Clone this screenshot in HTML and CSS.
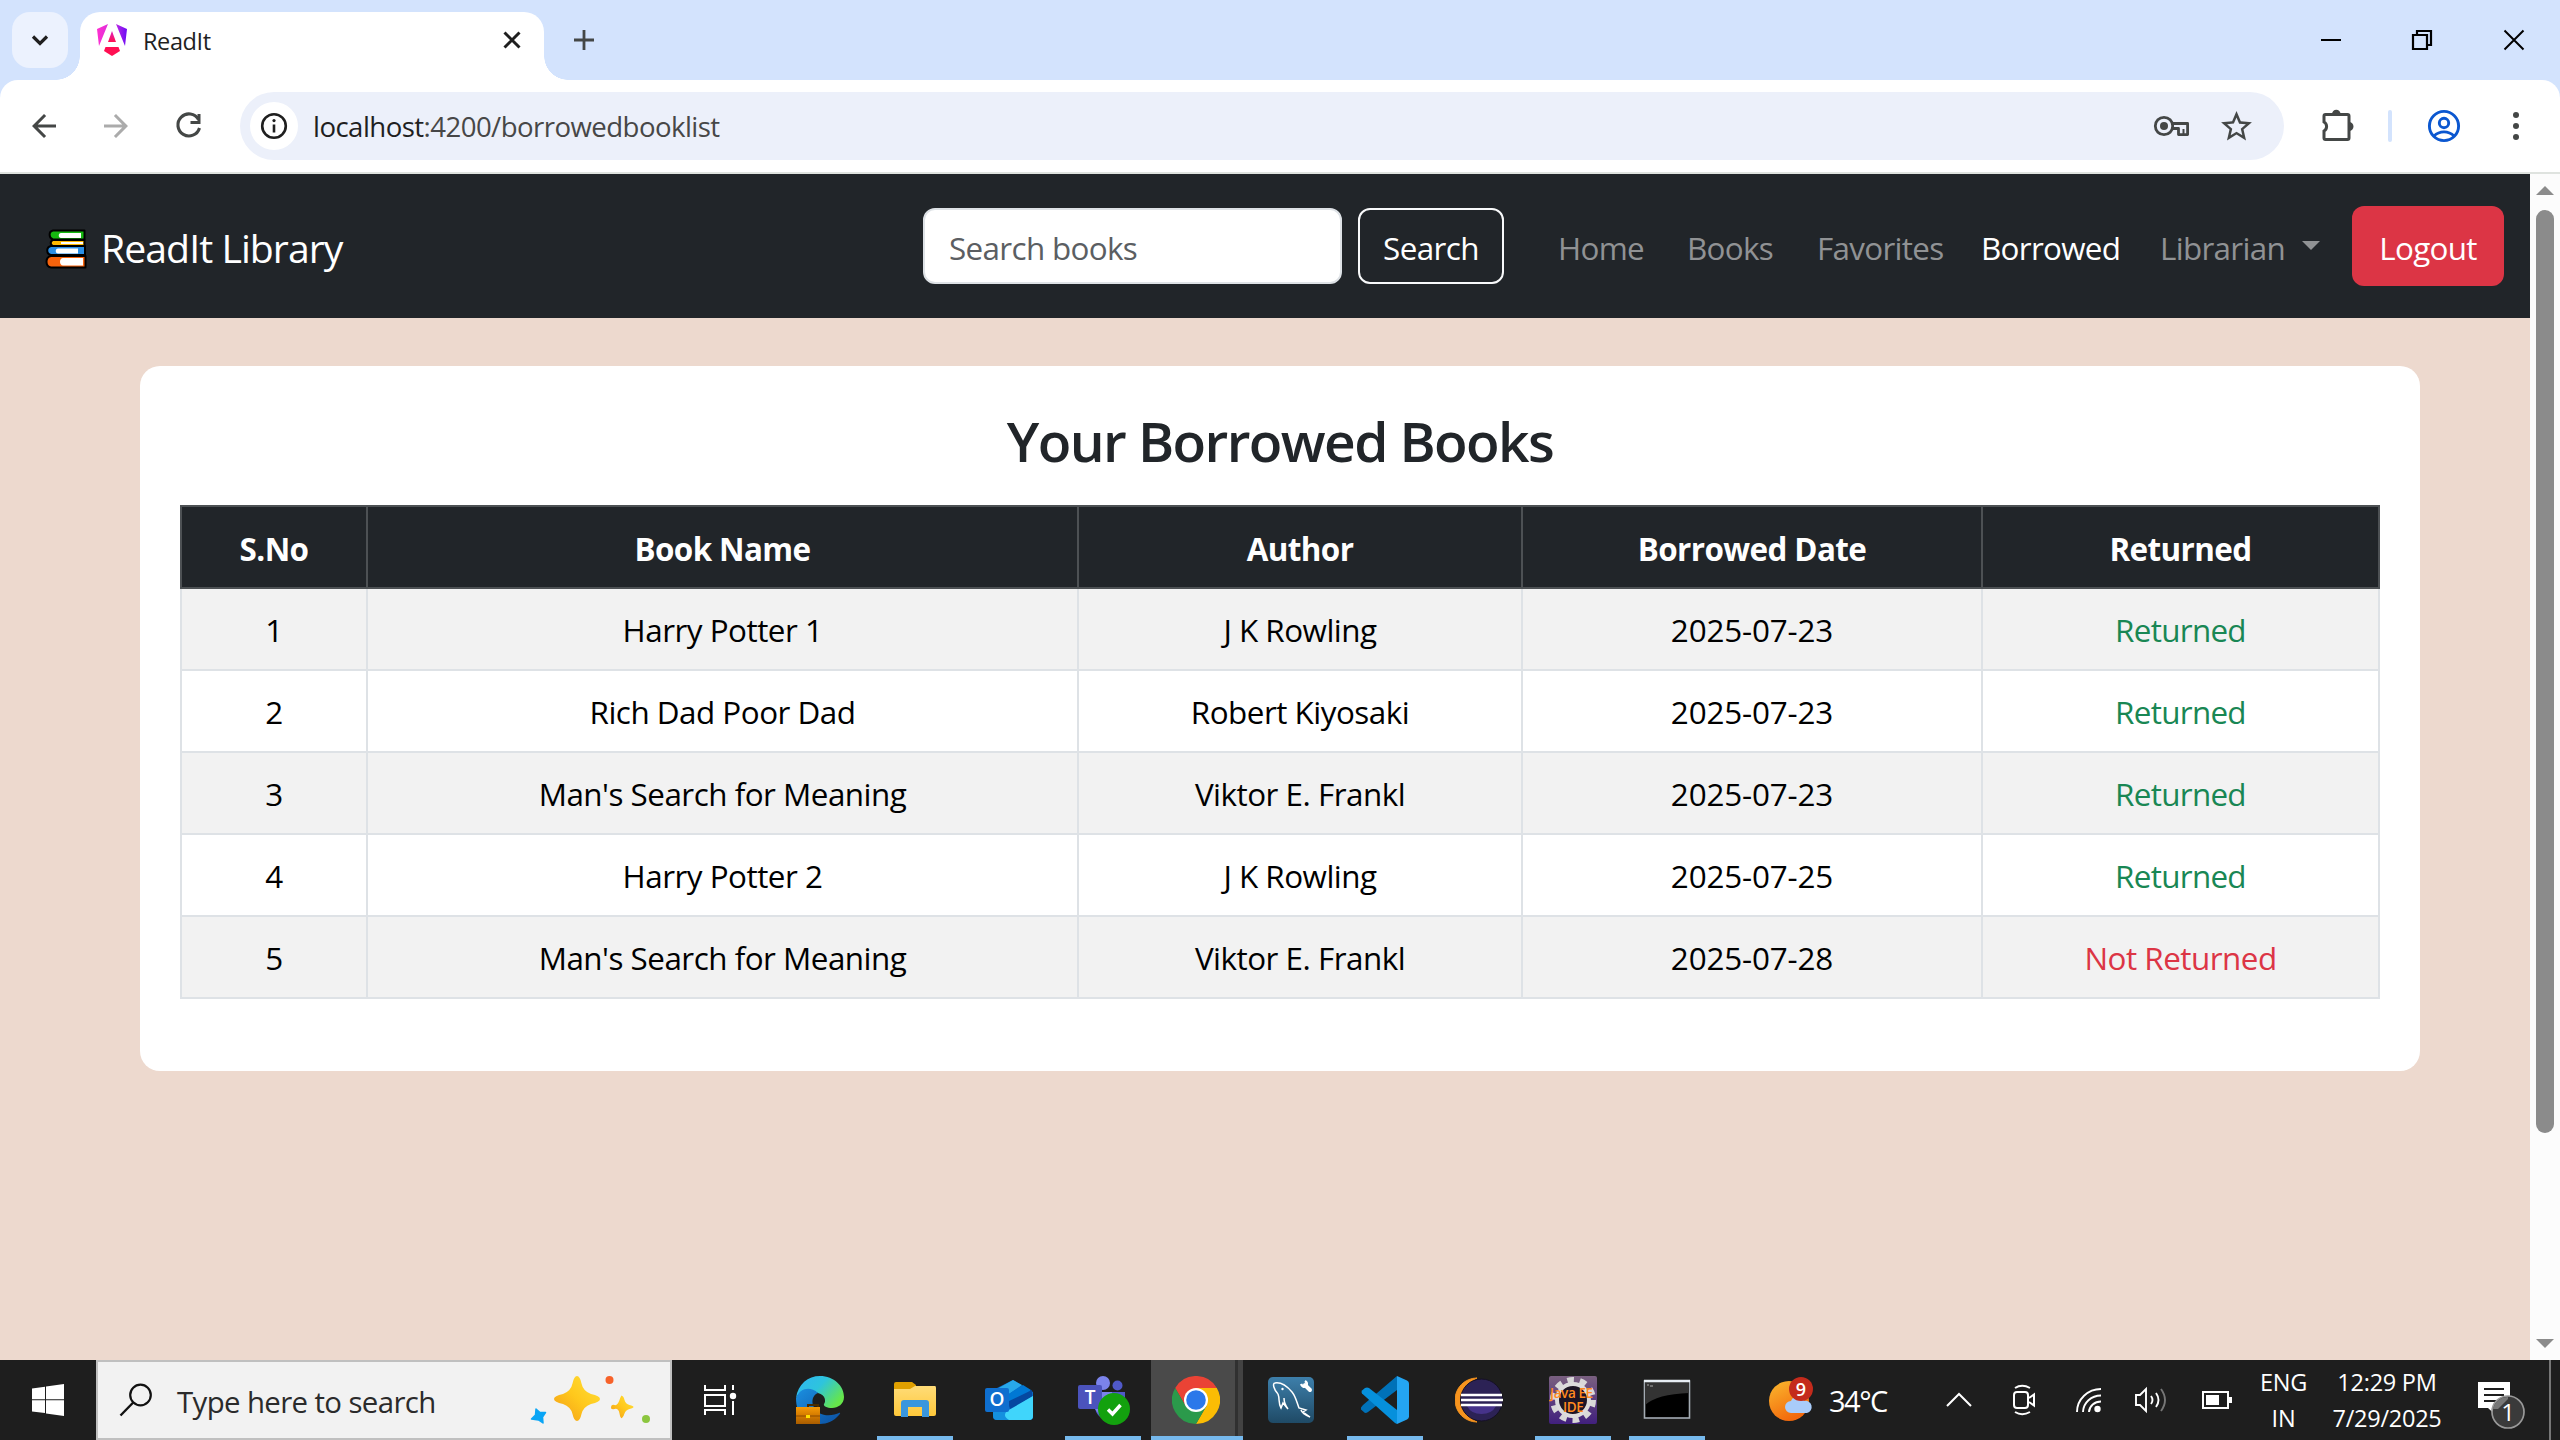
FILE: index.html
```html
<!DOCTYPE html>
<html lang="en">
<head>
<meta charset="utf-8">
<title>ReadIt</title>
<link rel="stylesheet" href="styles.css">
</head>
<body>
<div class="screen">
  <header class="tabstrip">
    <div class="tab-menu">
      <svg width="56" height="56" viewBox="0 0 56 56"><path d="M21 24.500l7 7 7-7" fill="none" stroke="#1f1f1f" stroke-width="3.200"/></svg>
    </div>
    <div class="tab">
      <svg class="favicon" width="32" height="34" viewBox="0 0 32 34">
        <defs>
          <linearGradient id="ngA" x1="0" y1="0" x2="1" y2="0"><stop offset="0" stop-color="#ff2fd0"/><stop offset=".55" stop-color="#d02ee0"/><stop offset="1" stop-color="#6a0cf5"/></linearGradient>
          <linearGradient id="ngB" x1="0" y1="0" x2="0" y2="1"><stop offset="0" stop-color="#e01fc0"/><stop offset="1" stop-color="#ff1150"/></linearGradient>
        </defs>
        <path d="M1 6L12 1 3 23zM31 6L20 1l9 22z" fill="url(#ngA)"/>
        <path d="M16 8l4 11h-8z" fill="url(#ngB)"/>
        <path d="M9.500 24h13l1.500 4-8 5-8-5z" fill="#ff0f52"/>
      </svg>
      <span class="tab-title">ReadIt</span>
      <svg class="tab-close" width="20" height="20" viewBox="0 0 20 20"><path d="M2.500 2.500l15 15M17.500 2.500l-15 15" stroke="#1f1f1f" stroke-width="3"/></svg>
    </div>
    <svg class="tab-add" width="24" height="24" viewBox="0 0 24 24"><path d="M12 2v20M2 12h20" stroke="#444746" stroke-width="2.800"/></svg>
    <div class="window-controls">
      <svg width="92" height="80" viewBox="0 0 92 80"><path d="M37 40h20" stroke="#000" stroke-width="2"/></svg>
      <svg width="92" height="80" viewBox="0 0 92 80"><path d="M37 35h14v14H37zM41 34v-3h14v14h-3" fill="none" stroke="#000" stroke-width="2.200"/></svg>
      <svg width="92" height="80" viewBox="0 0 92 80"><path d="M36.500 30.500l19 19M55.500 30.500l-19 19" stroke="#000" stroke-width="2"/></svg>
    </div>
  </header>

  <div class="toolbar-wrap">
    <div class="toolbar">
      <svg class="nav-back" width="36" height="36" viewBox="0 0 24 24"><path d="M20 11H7.830l5.590-5.590L12 4l-8 8 8 8 1.410-1.410L7.830 13H20z" fill="#444746"/></svg>
      <svg class="nav-forward" width="36" height="36" viewBox="0 0 24 24"><path d="M4 11h12.170l-5.590-5.590L12 4l8 8-8 8-1.410-1.410L16.170 13H4z" fill="#ababab"/></svg>
      <svg class="nav-reload" width="36" height="36" viewBox="0 0 36 36"><path d="M27.500 11.500A11 11 0 1 0 28.500 20" fill="none" stroke="#444746" stroke-width="3.100"/><path d="M29.500 6v10h-10v-3h7V6z" fill="#444746"/></svg>
      <div class="omnibox">
        <div class="site-info">
          <svg width="30" height="30" viewBox="0 0 30 30"><circle cx="15" cy="15" r="11.800" fill="none" stroke="#1f1f1f" stroke-width="2.600"/><path d="M15 13.500v8" stroke="#1f1f1f" stroke-width="2.600"/><circle cx="15" cy="9.600" r="1.600" fill="#1f1f1f"/></svg>
        </div>
        <span class="url"><b>localhost</b>:4200/borrowedbooklist</span>
        <svg class="key" width="40" height="24" viewBox="0 0 40 24"><circle cx="12" cy="12" r="8.700" fill="none" stroke="#444746" stroke-width="2.800"/><circle cx="12" cy="12" r="4" fill="#444746"/><path d="M19.500 9.500H35.600V20.600H26.500V14.500H19.500" fill="none" stroke="#444746" stroke-width="2.800" stroke-linejoin="round"/><path d="M31.500 15v5" stroke="#444746" stroke-width="2"/></svg>
        <svg class="star" width="37" height="37" viewBox="0 0 24 24"><path d="M22 9.240l-7.190-.62L12 2 9.190 8.630 2 9.240l5.460 4.730L5.820 21 12 17.270 18.180 21l-1.630-7.030L22 9.240zM12 15.400l-3.760 2.270 1-4.280-3.320-2.880 4.380-.38L12 6.100l1.710 4.040 4.380.38-3.320 2.880 1 4.280L12 15.400z" fill="#444746"/></svg>
      </div>
      <svg class="puzzle" width="36" height="36" viewBox="0 0 36 36"><path d="M6.500 6.500h22a1.500 1.500 0 0 1 1.500 1.500v22a1.500 1.500 0 0 1-1.500 1.500h-22A1.500 1.500 0 0 1 5 30v-7a5.200 5.200 0 0 0 0-9V8a1.500 1.500 0 0 1 1.500-1.500z" fill="none" stroke="#444746" stroke-width="3"/><path d="M13 6a4.300 4.300 0 0 1 8.600 0zM30 14a4.300 4.300 0 0 1 0 9z" fill="#444746"/></svg>
      <i class="divider"></i>
      <svg class="profile" width="36" height="36" viewBox="0 0 36 36"><g fill="none" stroke="#0b57d0" stroke-width="2.900"><circle cx="18" cy="18" r="14.600"/><circle cx="18" cy="15" r="4.700"/><path d="M8 28c5.500-5.500 14.500-5.500 20 0"/></g></svg>
      <svg class="more" width="12" height="36" viewBox="0 0 12 36"><g fill="#444746"><circle cx="6" cy="7" r="3"/><circle cx="6" cy="18" r="3"/><circle cx="6" cy="29" r="3"/></g></svg>
    </div>
  </div>

  <div class="viewport">
    <main class="page">
      <nav class="navbar">
        <svg class="books" width="42" height="40" viewBox="0 0 42 40">
          <g stroke="#000" stroke-width="2" stroke-linejoin="round">
            <path d="M8 1.500h31.500v9H8c-4-1-5-8 0-9z" fill="#16b810"/>
            <path d="M8 11h31.500v6H8c-3-1-3-5 0-6z" fill="#ffb900"/>
            <path d="M6 17h34v9H6c-5-1-5-8 0-9z" fill="#2a8fe6"/>
            <path d="M6 27h34.500v11.500H6c-6-1-6-10.500 0-11.500z" fill="#f7630c"/>
          </g>
          <path d="M16 4h20v5H16c-3 0-3-5 0-5zM16 13h22v2H16zM13 19.500h20v5H13c-3 0-3-5 0-5zM18 29h20v7.500H18c-4 0-4-7.500 0-7.500z" fill="#fff"/>
        </svg>
        <a class="brand">ReadIt Library</a>
        <form class="search">
          <div class="search-input">Search books</div>
          <div class="search-button">Search</div>
        </form>
        <ul class="links">
          <li class="home">Home</li>
          <li class="booklink">Books</li>
          <li class="favorites">Favorites</li>
          <li class="borrowed active">Borrowed</li>
          <li class="role">Librarian<i class="caret"></i></li>
        </ul>
        <div class="logout">Logout</div>
      </nav>

      <section class="card">
        <h2>Your Borrowed Books</h2>
        <table>
          <colgroup><col class="c1"><col class="c2"><col class="c3"><col class="c4"><col class="c5"></colgroup>
          <thead>
            <tr><th>S.No</th><th>Book Name</th><th>Author</th><th>Borrowed Date</th><th>Returned</th></tr>
          </thead>
          <tbody>
            <tr><td>1</td><td>Harry Potter 1</td><td>J K Rowling</td><td class="date">2025-07-23</td><td class="yes">Returned</td></tr>
            <tr><td>2</td><td>Rich Dad Poor Dad</td><td>Robert Kiyosaki</td><td class="date">2025-07-23</td><td class="yes">Returned</td></tr>
            <tr><td>3</td><td>Man's Search for Meaning</td><td>Viktor E. Frankl</td><td class="date">2025-07-23</td><td class="yes">Returned</td></tr>
            <tr><td>4</td><td>Harry Potter 2</td><td>J K Rowling</td><td class="date">2025-07-25</td><td class="yes">Returned</td></tr>
            <tr><td>5</td><td>Man's Search for Meaning</td><td>Viktor E. Frankl</td><td class="date">2025-07-28</td><td class="no">Not Returned</td></tr>
          </tbody>
        </table>
      </section>
    </main>
    <aside class="scrollbar">
      <svg width="18" height="9" viewBox="0 0 18 9"><path d="M0 9L9 0l9 9z" fill="#8b8b8b"/></svg>
      <div class="thumb"></div>
      <svg class="down" width="18" height="9" viewBox="0 0 18 9"><path d="M0 0h18L9 9z" fill="#8b8b8b"/></svg>
    </aside>
  </div>

  <footer class="taskbar">
    <div class="start">
      <svg width="32" height="32" viewBox="0 0 32 32"><path d="M0 4.500L13 2.700v12.600H0zM14 2.500L32 0v15.300H14zM0 16.300h13v12.800L0 27.400zM14 16.300h18V32l-18-2.600z" fill="#fff"/></svg>
    </div>
    <div class="task-search">
      <svg width="34" height="34" viewBox="0 0 34 34"><circle cx="21.500" cy="12" r="10.300" fill="none" stroke="#111" stroke-width="2.200"/><path d="M14.200 19.500L1.500 32.500" stroke="#111" stroke-width="2.400"/></svg>
      <span>Type here to search</span>
      <svg class="sparkles" width="124" height="52" viewBox="0 0 124 52">
        <defs><linearGradient id="gold" x1="1" y1="0" x2="0" y2="1"><stop offset="0" stop-color="#ffe03a"/><stop offset=".5" stop-color="#ffc81c"/><stop offset="1" stop-color="#f29a18"/></linearGradient></defs>
        <path d="M49 2q3 0 4.500 7.500Q55 17 63 20q9 2 9 5t-9 5q-8 3-9.500 10Q52 47 49 47t-4.500-7Q43 33 35 30q-9-2-9-5t9-5q8-3 9.500-10.500Q46 2 49 2z" fill="url(#gold)"/>
        <path d="M94 22q1.500 0 2.500 4t5 5q4 1 4 2t-4 2-5 4.500-2.500 4.500-2.500-4.500-5-4.500-3.500-2 3.500-2 5-5 2.500-4z" fill="url(#gold)"/>
        <path d="M8 35l4 3.500 5.500 0-3 4.500 .5 6-4.500-3-7-1 4-4z" fill="#0aa5f5" stroke="#0aa5f5" stroke-width="1.500" stroke-linejoin="round"/>
        <circle cx="81.500" cy="6" r="4" fill="#f7622a"/><circle cx="118" cy="45" r="4" fill="#8cc63f"/>
      </svg>
    </div>
    <div class="task-view">
      <svg width="34" height="32" viewBox="0 0 34 32"><path d="M2 1v5h20V1M2 11h20v11H2zM2 31v-5h20v5M30 1v5M30 17v14" fill="none" stroke="#fff" stroke-width="2"/><circle cx="30" cy="12" r="3.200" fill="#fff"/></svg>
    </div>
    <div class="apps">
      <div class="app"><svg width="48" height="48" viewBox="0 0 48 48">
        <defs>
          <linearGradient id="edA" x1="0" y1="0" x2="1" y2=".6"><stop offset="0" stop-color="#2fb6f5"/><stop offset=".5" stop-color="#2ec4dd"/><stop offset="1" stop-color="#66e64a"/></linearGradient>
          <linearGradient id="edB" x1="0" y1="0" x2="1" y2="1"><stop offset="0" stop-color="#1b8fe0"/><stop offset="1" stop-color="#0b4fa0"/></linearGradient>
          <linearGradient id="bag" x1="0" y1="0" x2="0" y2="1"><stop offset="0" stop-color="#f59a08"/><stop offset=".45" stop-color="#d77d00"/><stop offset="1" stop-color="#a85c00"/></linearGradient>
        </defs>
        <path d="M0 22C2 8 12 0 24 0c14 0 24 10 24 21 0 7-6 11-12 11-5 0-9-2-8-4 2-2 2-9-6-11C14 12 4 14 0 22z" fill="url(#edA)"/>
        <path d="M0 22C4 12 14 10 22 17c-6 2-9 12 1 20 7 4 16 2 20 0 2-1 1 1 0 2-5 6-12 9-19 9C8 48 0 38 0 22z" fill="url(#edB)"/>
        <path d="M12 31v-2h10v2" fill="none" stroke="#4a2c00" stroke-width="2"/>
        <path d="M0 31h24v17H0z" fill="url(#bag)"/><path d="M0 39.500h24v1H0z" fill="#8a4a00"/><path d="M10 39h4v3h-4z" fill="#ffe100"/>
      </svg></div>
      <div class="app open"><svg class="shifted" width="48" height="48" viewBox="0 0 48 48">
        <defs><linearGradient id="fold" x1="0" y1="0" x2="0" y2="1"><stop offset="0" stop-color="#ffdc78"/><stop offset="1" stop-color="#ffc83a"/></linearGradient></defs>
        <path d="M5 6h16l4 3v6H3V8q0-2 2-2z" fill="#e0a000"/><path d="M3 13h16l5-3h20q1 0 1 2v26q0 2-2 2H5q-2 0-2-2z" fill="url(#fold)"/>
        <path d="M10 41V27q0-3 3-3h22q3 0 3 3v14h-7V31H17v10z" fill="#3996dd"/>
      </svg></div>
      <div class="app"><svg class="shifted" width="48" height="48" viewBox="0 0 48 48">
        <path d="M8 14L28 4l20 12v24q0 4-4 4H12q-4 0-4-4z" fill="#0a66c2"/>
        <path d="M10 14L28 4l9 5-16 11z" fill="#28a8ea"/><path d="M22 19l16-10 8 5-22 15z" fill="#0078d4"/><path d="M22 26l25-12v8L26 34z" fill="#0548a0"/>
        <path d="M8 36h14l26-16v20q0 4-4 4H12q-4 0-4-4z" fill="#1490df"/><path d="M48 20v20q0 4-4 4H24q-7-4-2-9z" fill="#40d5fb"/>
        <rect y="12" width="24" height="24" rx="2" fill="#0f6fcf"/><text x="12" y="30" class="glyph-o">O</text>
      </svg></div>
      <div class="app open"><svg class="teams" width="54" height="52" viewBox="0 0 54 52">
        <circle cx="25" cy="9" r="7" fill="#7b83eb"/><circle cx="39.500" cy="11.500" r="5" fill="#5059c9"/>
        <path d="M14 18h33v12L35 46q-8 2-14-4-4-4-4-10z" fill="#5059c9"/><path d="M14 18h20v26q-10 1-14-5-4-4-4-10z" fill="#7b83eb"/>
        <rect y="11" width="24" height="24" rx="2" fill="#4b53bc"/><text x="12" y="29.500" class="glyph-t">T</text>
        <circle cx="36" cy="35" r="16" fill="#13a10e"/><path d="M30 35.500l4.500 4.500 8-9" fill="none" stroke="#fff" stroke-width="3.400"/>
      </svg></div>
      <div class="app open current"><svg width="48" height="48" viewBox="0 0 48 48">
        <path d="M3.200 12l10.400 18L24 12h20.800A24 24 0 0 0 3.200 12z" fill="#ea4335"/>
        <path d="M24 12h20.800A24 24 0 0 1 24 48l10.400-18z" fill="#fbbc04"/>
        <path d="M3.200 12A24 24 0 0 0 24 48l10.400-18H13.600z" fill="#2b9a4b"/>
        <circle cx="24" cy="24" r="12" fill="#fff"/><circle cx="24" cy="24" r="9.800" fill="#2b78ea"/>
      </svg></div>
      <div class="app"><svg class="shifted" width="48" height="48" viewBox="0 0 48 48">
        <defs><linearGradient id="wb" x1="0" y1="0" x2="0" y2="1"><stop offset="0" stop-color="#3d7fab"/><stop offset="1" stop-color="#1f4a66"/></linearGradient></defs>
        <rect x="1" y="1" width="46" height="46" rx="5" fill="url(#wb)"/>
        <path d="M11 18C7 14 5 7 8 7c6-1 11 2 17 9 4 5 5 11 7 16l7 2-3 2 7 5c-5-2-8-4-9-7M11 18c2 5 0 9 3 14l2-5 5 6c-3-4-4-8-4-11" fill="none" stroke="#fff" stroke-width="1.500"/><circle cx="15.500" cy="13" r="1.200" fill="#fff"/>
        <path d="M38 9l5 5" stroke="#fff" stroke-width="4" stroke-linecap="round"/><path d="M34 8q2 4 5 2 2-3-1-5" fill="none" stroke="#fff" stroke-width="2.500"/>
      </svg></div>
      <div class="app open"><svg class="shifted" width="48" height="48" viewBox="0 0 48 48">
        <path d="M0 31.500v2L4 37q2 0 3-1L36 14V0L2 29z" fill="#0071b8"/>
        <path d="M1 17.500q-1-1.500 0-3L4 12q2-1 4 0l28 22v14l-2-1z" fill="#0690dc"/><path d="M36 0l10 4.500q2 1 2 3v33q0 2-2 3L36 48z" fill="#24a5f2"/>
      </svg></div>
      <div class="app"><svg class="shifted" width="48" height="48" viewBox="0 0 48 48">
        <path d="M22 2A22 22 0 0 0 22 46 24 24 0 0 1 22 2z" fill="#f7941e" stroke="#f7941e"/><circle cx="26.500" cy="24" r="21" fill="#2c2255" stroke="#151025"/>
        <path d="M12 30h29q-4 8-14.500 8T12 30z" fill="#46338a"/><path d="M6 19h41M6 24h42M6 29h41" stroke="#fff" stroke-width="2.300"/>
      </svg></div>
      <div class="app open"><svg class="shifted" width="48" height="48" viewBox="0 0 48 48">
        <defs><linearGradient id="jee" x1="0" y1="0" x2="0" y2="1"><stop offset="0" stop-color="#7a6080"/><stop offset="1" stop-color="#41207d"/></linearGradient></defs>
        <rect width="48" height="48" rx="2" fill="url(#jee)"/>
        <circle cx="24" cy="24" r="20" fill="none" stroke="#d8d8d8" stroke-width="6" stroke-dasharray="6.600 5.966"/><circle cx="24" cy="24" r="16" fill="#1c1525" stroke="#dcdcdc" stroke-width="4"/>
        <text x="1" y="22" class="jee-text">Java EE</text><text x="14" y="36" class="jee-text">IDE</text>
      </svg></div>
      <div class="app open"><svg class="shifted" width="48" height="48" viewBox="0 0 48 48">
        <rect x="1.500" y="5" width="45" height="37" fill="#000" stroke="#a3abb3" stroke-width="1.600"/><path d="M2 6h44v11Q14 18 2 29z" fill="#333"/><path d="M1 5h46" stroke="#e8eef4" stroke-width="2.500"/><path d="M4 9h2M7 10h3" stroke="#aaa"/>
      </svg></div>
    </div>
    <div class="weather">
      <svg width="46" height="46" viewBox="0 0 46 46">
        <defs><linearGradient id="sun" x1="0" y1="0" x2=".5" y2="1"><stop offset="0" stop-color="#fbb92e"/><stop offset="1" stop-color="#f2680c"/></linearGradient></defs>
        <circle cx="20" cy="24" r="20" fill="url(#sun)"/><path d="M22 36a6 6 0 0 1 0-12 7 7 0 0 1 13 0 6 6 0 0 1 3 12z" fill="#a9ccfa"/>
        <circle cx="32" cy="12" r="12" fill="#c42b1c"/><text x="32" y="18.500" class="badge-text">9</text>
      </svg>
      <span>34°C</span>
    </div>
    <div class="tray">
      <div class="chevron"><svg width="28" height="16" viewBox="0 0 28 16"><path d="M2 14L14 2l12 12" fill="none" stroke="#fff" stroke-width="2"/></svg></div>
      <div class="camera"><svg width="26" height="32" viewBox="0 0 26 32"><g fill="none" stroke="#fff" stroke-width="2"><rect x="3" y="8" width="14" height="16" rx="3"/><path d="M18 14l5-3.500v11L18 18M4 4q7-4.500 15 0M4 28q7 4.500 15 0"/></g></svg></div>
      <div class="wifi"><svg width="28" height="26" viewBox="0 0 28 26"><g fill="none" stroke="#fff" stroke-width="1.900"><path d="M2 25A24 23 0 0 1 26 2"/><path d="M8 25A18 17 0 0 1 26 8.500"/><path d="M14 25A12 11 0 0 1 26 14.500"/></g><circle cx="22.500" cy="22" r="3.200" fill="#fff"/></svg></div>
      <div class="volume"><svg width="34" height="28" viewBox="0 0 34 28"><g fill="none" stroke="#fff" stroke-width="1.900"><path d="M2 9h4l6-6v22l-6-6H2z"/><path d="M17 10q3 4 0 8M22 7q5 7 0 14"/><path d="M27 3q8 11 0 22" stroke="#777"/></g></svg></div>
      <div class="battery"><svg width="32" height="20" viewBox="0 0 32 20"><path d="M2 2h25v16H2z" fill="none" stroke="#fff" stroke-width="2"/><path d="M5 5h13v10H5zM28 7h3v6h-3z" fill="#fff"/></svg></div>
      <div class="language"><span>ENG</span><span>IN</span></div>
      <div class="clock"><span>12:29 PM</span><span>7/29/2025</span></div>
      <div class="notifications"><svg width="50" height="50" viewBox="0 0 50 50"><path d="M0 0h32v26H16.500v6L10 26H0z" fill="#fff"/><path d="M6 7h20M6 13h20M6 19h14" stroke="#1e1e1e" stroke-width="2"/><circle cx="30" cy="30" r="16" fill="#3a3a3a" stroke="#999" stroke-width="1.700"/><path d="M15 27A15 15 0 0 1 30 15v2l-10 10z" fill="#777"/><text x="30" y="38.500" class="count">1</text></svg></div>
    </div>
  </footer>
</div>
</body>
</html>
```
FILE: styles.css
```css
* { box-sizing: border-box; }
html, body { margin: 0; }
body { font-family: "Open Sans", "Noto Sans", sans-serif; font-size: 31.4px; letter-spacing: -.5px; color: #212529; }
svg { display: block; flex: none; }
.screen { width: 2560px; height: 1440px; overflow: hidden; display: flex; flex-direction: column; }

/* Browser tabs */
.tabstrip { height: 80px; flex: none; display: flex; align-items: flex-start; padding: 12px 0 0 12px; background: #d3e3fd; }
.tab-menu { width: 56px; height: 56px; border-radius: 18px; background: #ecf2fe; }
.tab { position: relative; width: 464px; height: 68px; margin-left: 12px; padding: 0 22px 0 16px; display: flex; align-items: center; background: #fff; border-radius: 20px 20px 0 0; }
.tab::before, .tab::after { content: ""; position: absolute; bottom: 0; width: 24px; height: 24px; }
.tab::before { left: -24px; background: radial-gradient(circle at 0 0, transparent 23.5px, #fff 24px); }
.tab::after { right: -24px; background: radial-gradient(circle at 100% 0, transparent 23.5px, #fff 24px); }
.favicon { margin-top: -12px; }
.tab-title { margin: -10px 0 0 15px; font-size: 23.5px; letter-spacing: -.4px; color: #1f1f1f; }
.tab-close { margin: -12px 0 0 auto; }
.tab-add { margin: 16px 0 0 28px; }
.window-controls { margin: -12px 0 0 auto; display: flex; }

/* Address bar */
.toolbar-wrap { height: 94px; flex: none; background: #d3e3fd; }
.toolbar { height: 94px; display: flex; align-items: center; padding: 0 38px 0 26px; background: #fff; border-bottom: 2px solid #dfe3df; border-radius: 18px 18px 0 0; }
.nav-forward { margin-left: 36px; }
.nav-reload { margin-left: 37px; }
.omnibox { width: 2044px; height: 68px; margin-left: 33px; padding: 0 29px 0 10px; display: flex; align-items: center; border-radius: 34px; background: #ecf0fa; }
.site-info { width: 48px; height: 48px; border-radius: 50%; background: #fff; display: grid; place-items: center; }
.url { margin-left: 15px; font-size: 27.6px; letter-spacing: -.56px; color: #474747; }
.url b { font-weight: 400; color: #1f1f1f; }
.key { margin-left: auto; }
.star { margin-left: 26px; }
.puzzle { margin-left: 35px; }
.divider { width: 4px; height: 32px; margin-left: 33px; border-radius: 2px; background: #d3e3fd; }
.profile { margin-left: 34px; }
.more { margin-left: auto; }

/* Page */
.viewport { height: 1186px; display: flex; }
.page { width: 2530px; background: #edd9ce; }
.navbar { height: 144px; display: flex; align-items: center; padding: 0 26px 0 45px; background: #212529; color: #fff; }
.books { margin-top: 5px; }
.brand { margin: 2px 0 0 14px; font-size: 39.2px; letter-spacing: -.95px; }
.search { display: flex; gap: 16px; margin: 0 0 0 auto; }
.search-input { width: 419px; height: 76px; padding: 2px 23px 0 24px; display: flex; align-items: center; border: 2px solid #dee2e6; border-radius: 12px; background: #fff; color: #5b5e62; letter-spacing: -.65px; }
.search-button { width: 146px; height: 76px; padding-top: 2px; display: flex; align-items: center; justify-content: center; border: 2px solid #f8f9fa; border-radius: 12px; letter-spacing: -.6px; }
.links { width: 794px; margin: 0; padding: 2px 0 0 54px; list-style: none; display: flex; color: #909294; letter-spacing: -.7px; }
.links li { flex: none; }
.home { width: 129px; }
.booklink { width: 130px; }
.favorites { width: 164px; }
.borrowed { width: 179px; }
.role { display: flex; align-items: center; white-space: nowrap; }
.active { color: #fff; }
.caret { margin: -4px 0 0 17px; border: 9px solid transparent; border-top-color: currentColor; border-bottom: 0; }
.logout { width: 152px; height: 80px; margin-left: 54px; padding-top: 2px; display: flex; align-items: center; justify-content: center; border-radius: 12px; background: #dc3545; letter-spacing: -.7px; }
.card { width: 2280px; height: 705px; margin: 48px 0 0 140px; padding: 40px; border-radius: 20px; background: #fff; }
.card h2 { height: 99px; margin: 0; padding-top: 1px; font-size: 55px; line-height: 68px; font-weight: 600; letter-spacing: -1.6px; text-align: center; }
table { width: 2200px; table-layout: fixed; border-collapse: separate; border-spacing: 0; color: #000; text-align: center; }
.c1 { width: 188px; } .c2 { width: 711px; } .c3 { width: 444px; } .c4 { width: 460px; } .c5 { width: 397px; }
th, td { height: 82px; padding: 1px 0 0; border: solid #dee2e6; border-width: 0 2px 2px 0; }
th:first-child, td:first-child { border-left-width: 2px; }
th { height: 84px; padding-top: 3px; border-color: #4d5154; border-top-width: 2px; background: #212529; color: #fff; font-weight: 700; letter-spacing: -.6px; }
tbody tr:nth-child(odd) { background: #f2f2f2; }
td.date { letter-spacing: -.15px; }
td.yes { color: #198754; letter-spacing: -.7px; }
td.no { color: #dc3545; }
.scrollbar { width: 30px; padding: 12px 6px; display: flex; flex-direction: column; background: #fcfcfc; }
.thumb { height: 923px; margin-top: 15px; border-radius: 9px; background: #8b8b8b; }
.down { margin-top: auto; }

/* Taskbar */
.taskbar { height: 80px; flex: none; display: flex; background: #1e1e1e; color: #fff; }
.start { width: 96px; display: grid; place-items: center; }
.task-search { width: 576px; padding: 0 18px 0 21px; display: flex; align-items: center; border: 2px solid #c0c0c0; background: #f2f2f2; color: #2b2b2b; font-size: 29.4px; letter-spacing: -.62px; }
.task-search span { margin: 4px 0 0 24px; }
.sparkles { margin: 0 0 0 auto; }
.task-view { width: 101px; padding-left: 31px; display: flex; align-items: center; }
.apps { display: flex; }
.app { position: relative; width: 94px; display: grid; place-items: center; }
.shifted { margin-left: 2px; }
.teams { margin-left: 5px; }
.open::after { content: ""; position: absolute; left: 10px; right: 8px; bottom: 0; height: 4px; background: #76b9ed; }
.current { background: linear-gradient(90deg, transparent 2px, #4a4a4a 2px 86px, #303030 86px 89px, #424242 89px); }
.current::after { left: 2px; right: 0; }
.weather { width: 217px; padding-left: 56px; display: flex; align-items: center; font-size: 29px; letter-spacing: -1.5px; }
.weather span { margin: 1px 0 0 14px; }
.tray { display: flex; flex: 1; }
.tray > div { display: flex; align-items: center; justify-content: center; }
.chevron { width: 58px; }
.camera { width: 72px; }
.wifi { width: 58px; }
.volume { width: 66px; }
.battery { width: 66px; }
.tray .language, .tray .clock { flex-direction: column; font-size: 23.5px; line-height: 36px; letter-spacing: -.25px; }
.language { width: 67px; }
.clock { width: 140px; }
.tray .notifications { width: 94px; padding: 13px 0 0 0; border-right: 2px solid #777; }
.glyph-o, .glyph-t, .badge-text, .count { fill: #fff; text-anchor: middle; letter-spacing: 0; font-weight: 600; font-size: 19px; }
.badge-text { font-size: 18px; }
.count { font-size: 24px; font-weight: 400; }
.jee-text { fill: #ff8a1f; font-size: 13.5px; font-weight: 600; letter-spacing: -.4px; }
```
